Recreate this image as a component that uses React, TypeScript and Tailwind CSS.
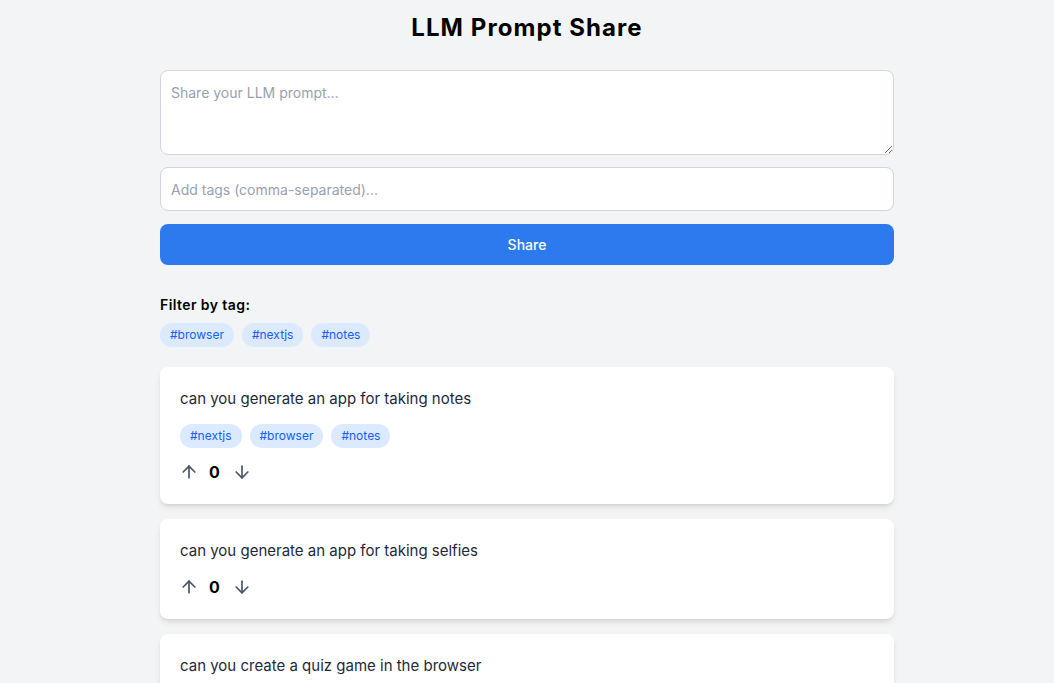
import { useState } from 'react'
import { ArrowUp, ArrowDown } from 'lucide-react'

type Prompt = {
  id: number
  text: string
  tags: string[]
  votes: number
}

const INITIAL: Prompt[] = [
  { id: 1, text: 'can you generate an app for taking notes', tags: ['nextjs', 'browser', 'notes'], votes: 0 },
  { id: 2, text: 'can you generate an app for taking selfies', tags: [], votes: 0 },
  { id: 3, text: 'can you create a quiz game in the browser', tags: [], votes: 0 },
]

const Tag = ({ name }: { name: string }) => (
  <span className="rounded-full bg-blue-100 px-2.5 py-1 text-xs text-blue-600">#{name}</span>
)

export default function App() {
  const [prompts, setPrompts] = useState(INITIAL)
  const [text, setText] = useState('')
  const [tags, setTags] = useState('')

  const vote = (id: number, delta: number) => {
    setPrompts(prompts.map((p) => (p.id === id ? { ...p, votes: p.votes + delta } : p)))
  }

  return (
    <div className="min-h-screen bg-gray-100 font-['Inter',sans-serif] text-gray-900">
      <div className="mx-auto max-w-[766px] px-4 pt-3 pb-8">
        <h1 className="mb-[26px] text-center text-2xl font-bold tracking-[0.045em] text-black">LLM Prompt Share</h1>

        <div className="flex flex-col">
          <textarea
            value={text}
            onChange={(e) => setText(e.target.value)}
            placeholder="Share your LLM prompt..."
            rows={3}
            className="h-[85px] w-full rounded-lg border border-gray-300 bg-white px-[10px] py-3 text-sm placeholder:text-gray-400 focus:outline-none"
          />
          <input
            value={tags}
            onChange={(e) => setTags(e.target.value)}
            placeholder="Add tags (comma-separated)..."
            className="mt-3 h-[44px] w-full rounded-lg border border-gray-300 bg-white px-[10px] text-sm placeholder:text-gray-400 focus:outline-none"
          />
          <button className="mt-[13px] h-[41px] w-full rounded-lg bg-[#2d7aef] text-sm font-medium text-white">
            Share
          </button>
        </div>

        <div className="mt-[30px] mb-5">
          <h2 className="mb-2 text-sm font-semibold tracking-[0.03em] text-black">Filter by tag:</h2>
          <div className="flex gap-2">
            <Tag name="browser" />
            <Tag name="nextjs" />
            <Tag name="notes" />
          </div>
        </div>

        <div className="flex flex-col gap-[15px]">
          {prompts.map((p) => (
            <div key={p.id} className="rounded-lg bg-white p-5 shadow-md">
              <p className="text-[15px] leading-6 text-gray-800">{p.text}</p>
              {p.tags.length > 0 && (
                <div className="mt-[13px] flex gap-2">
                  {p.tags.map((t) => (
                    <Tag key={t} name={t} />
                  ))}
                </div>
              )}
              <div className="mt-3 flex h-6 items-center gap-[10px]">
                <button onClick={() => vote(p.id, 1)} className="-ml-px text-gray-600">
                  <ArrowUp size={20} strokeWidth={2} />
                </button>
                <span className="font-bold text-black">{p.votes}</span>
                <button onClick={() => vote(p.id, -1)} className="ml-[2px] text-gray-600">
                  <ArrowDown size={20} strokeWidth={2} />
                </button>
              </div>
            </div>
          ))}
        </div>
      </div>
    </div>
  )
}
